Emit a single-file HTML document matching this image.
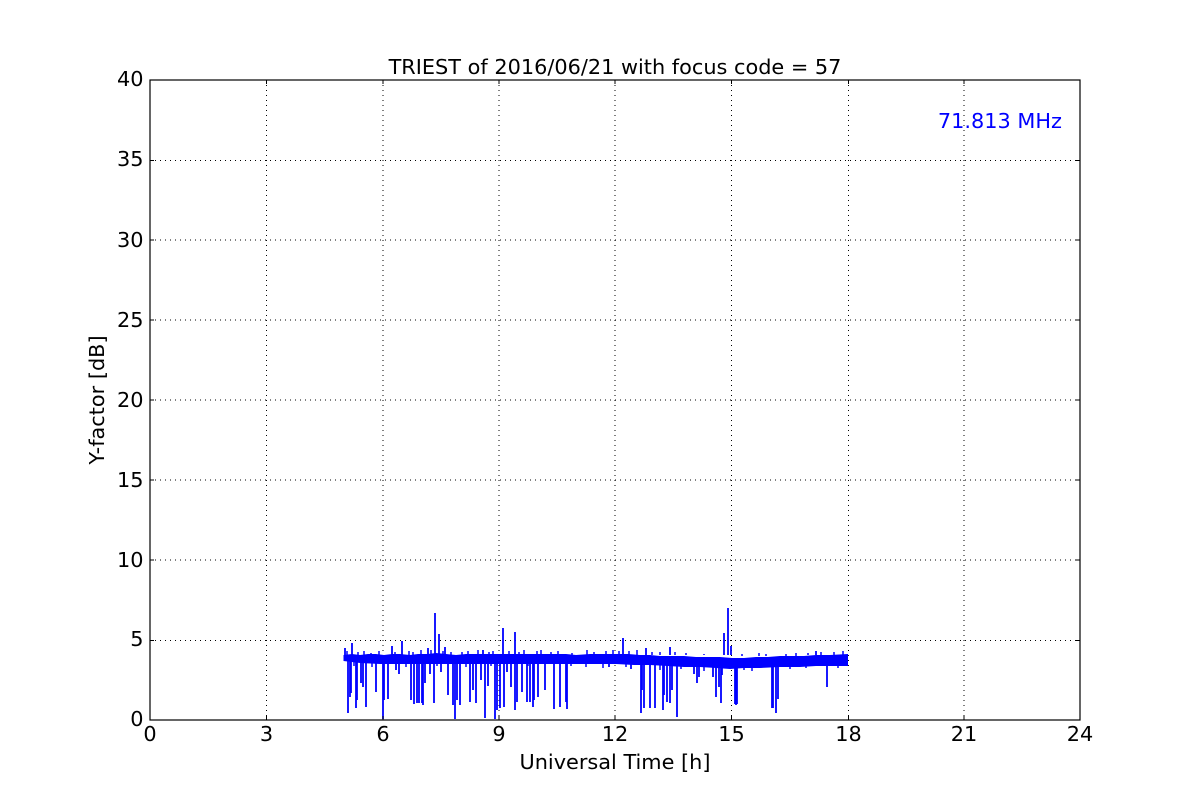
<!DOCTYPE html>
<html><head><meta charset="utf-8"><style>
html,body{margin:0;padding:0;background:#fff;width:1200px;height:800px;overflow:hidden}
svg{display:block}
text{font-family:"DejaVu Sans",sans-serif;fill:#000}
.t{font-size:20.83px}
.l{font-size:20.83px}
</style></head><body>
<svg width="1200" height="800" viewBox="0 0 1200 800" xmlns="http://www.w3.org/2000/svg">
<rect width="1200" height="800" fill="#fff"/>
<path d="M266.5 80V720M383 80V720M499 80V720M615 80V720M731.5 80V720M848.5 80V720M964 80V720M150 160.5H1080M150 240H1080M150 320H1080M150 400H1080M150 480H1080M150 560H1080M150 640.5H1080" fill="none" stroke="#000" stroke-width="1" stroke-dasharray="1,4"/>
<path d="M343.5 655L352 654 360 655 368 654 376 654 384 655 392 654 400 654 410 655 418 654 428 654 436 653 446 654 456 655 466 654 476 654 486 654 496 654 506 654 516 654 526 654 536 654 546 654 556 654 566 654 576 655 590 654 604 654 616 654 628 654 640 655 650 655 660 656 672 656 684 656 696 657 708 657 720 657 732 658 744 658 756 657 768 657 780 656 792 656 804 656 816 655 830 655 848 654L848 666 830 666 816 666 800 667 780 667 760 668 744 668 730 669 716 668 700 667 684 667 668 666 650 665 634 665 616 664 600 664 580 664 560 664 540 664 520 664 500 664 480 664 460 664 440 664 420 664 400 664 380 664 360 663 343.5 661Z" fill="#00f"/>
<path d="M347 655V651M358 655V652M364 655V651M371 655V653M379 655V651M395 655V652M409 655V651M413 655V652M421 655V650M431 655V650M443 655V651M451 655V652M462 655V652M468 655V651M478 655V650M489 655V652M493 655V651M509 655V651M519 655V652M524 655V650M537 655V651M541 655V650M551 655V652M558 655V651M572 655V653M587 655V650M594 655V652M606 655V651M613 655V650M619 655V651M629 655V651M637 655V650M652 655V652M660 655V652M675 655V652M686 655V653M704 655V654M742 656V654M759 656V653M766 656V654M786 656V654M796 656V653M808 655V653M821 655V652M834 655V652M843 655V651M354 662V666M372 662V667M406 662V667M437 662V666M466 662V667M491 662V666M528 662V666M571 662V666M586 662V667M603 662V668M626 662V667M660 664V670M681 665V669M704 665V671M744 666V670M752 666V671M790 665V669M806 665V668M838 664V668" fill="none" stroke="#00f" stroke-width="1.5"/>
<path d="M345 655V648M345 660V661M352 655V643M348 660V713M350 660V697M351 660V693M356 660V708M357 660V700M361 660V683M363 660V687M366 660V707M376 660V692M383 660V719M384 660V700M388 660V699M392 655V646M396 660V670M399 660V674M402 655V641M411 660V700M414 660V704M417 660V703M419 660V703M422 660V703M423 660V705M425 660V683M428 655V648M430 660V674M434 660V703M435 655V613M439 655V634M441 660V672M445 655V647M448 660V695M453 660V705M455 660V719M457 660V700M460 660V705M470 660V702M473 660V690M476 660V703M481 660V680M483 655V650M485 660V718M488 660V686M495 660V719M497 660V710M500 660V708M503 655V628M504 660V707M507 660V672M511 660V687M515 655V632M515 660V710M517 660V702M522 660V692M527 660V702M530 660V702M533 660V707M534 660V700M538 660V697M545 660V690M554 660V709M560 660V707M566 660V702M567 660V709M609 660V667M623 655V638M631 660V669M641 660V713M642 660V690M644 660V708M646 655V648M650 660V708M655 660V708M663 660V710M664 660V695M667 660V702M670 655V647M670 660V703M672 660V690M677 660V717M694 660V674M697 660V683M699 660V677M713 660V677M716 660V697M719 660V687M721 660V703M722 660V675M724 655V633M728 655V608M731 655V646M735 660V704M736 660V705M737 660V704M772 660V708M773 660V708M776 660V713M778 660V699M816 655V651M827 660V687" fill="none" stroke="#00f" stroke-width="1.8"/>
<rect x="150" y="80" width="930" height="640" fill="none" stroke="#000" stroke-width="1.2"/>
<path d="M266.5 80v4M383 80v4M499 80v4M615 80v4M731.5 80v4M848.5 80v4M964 80v4M266.5 720v-4M383 720v-4M499 720v-4M615 720v-4M731.5 720v-4M848.5 720v-4M964 720v-4M150 160.5h4M150 240h4M150 320h4M150 400h4M150 480h4M150 560h4M150 640.5h4M1080 160.5h-4M1080 240h-4M1080 320h-4M1080 400h-4M1080 480h-4M1080 560h-4M1080 640.5h-4" fill="none" stroke="#000" stroke-width="1"/>
<g text-anchor="end">
<text class="t" x="143.5" y="86">40</text>
<text class="t" x="143.5" y="166">35</text>
<text class="t" x="143.5" y="247">30</text>
<text class="t" x="143.5" y="327">25</text>
<text class="t" x="143.5" y="407">20</text>
<text class="t" x="143.5" y="487">15</text>
<text class="t" x="143.5" y="567">10</text>
<text class="t" x="143.5" y="646">5</text>
<text class="t" x="143.5" y="726">0</text>
</g>
<g text-anchor="middle">
<text class="t" x="150" y="741">0</text>
<text class="t" x="266.5" y="741">3</text>
<text class="t" x="383" y="741">6</text>
<text class="t" x="499" y="741">9</text>
<text class="t" x="615" y="741">12</text>
<text class="t" x="731.5" y="741">15</text>
<text class="t" x="848.5" y="741">18</text>
<text class="t" x="964" y="741">21</text>
<text class="t" x="1080" y="741">24</text>
<text class="l" x="615" y="74">TRIEST of 2016/06/21 with focus code = 57</text>
<text class="l" x="615" y="769">Universal Time [h]</text>
<text class="l" transform="translate(104 400) rotate(-90)">Y-factor [dB]</text>
</g>
<text class="l" x="1062" y="128" text-anchor="end" style="fill:#00f">71.813 MHz</text>
</svg>
</body></html>
